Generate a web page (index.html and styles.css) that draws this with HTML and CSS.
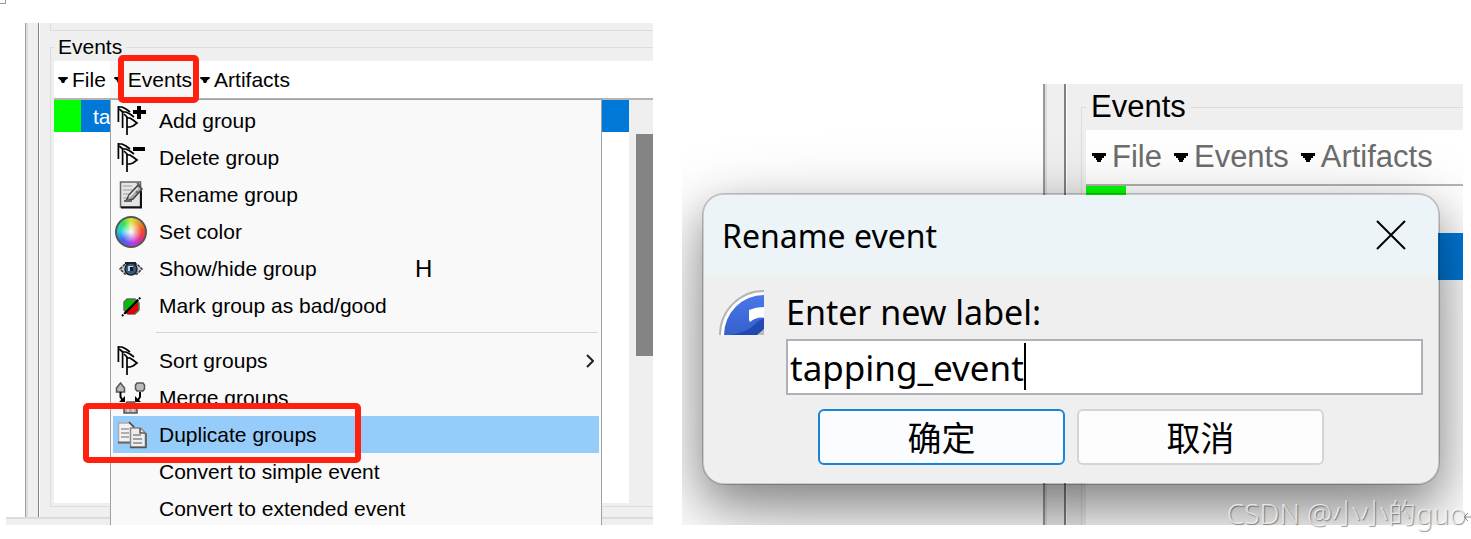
FILE: index.html
```html
<!DOCTYPE html>
<html lang="zh-CN">
<head>
  <meta charset="UTF-8">
  <meta name="viewport" content="width=device-width, initial-scale=1.0">
  <title>Events</title>
  <link rel="stylesheet" href="styles.css">
</head>
<body>
  <svg class="defs" width="0" height="0" aria-hidden="true">
    <symbol id="arrow" viewBox="0 0 14 9">
      <path d="M0 0h14v3h-2v2h-2v2H9v2H5V7H4V5H2V3H0z"/>
    </symbol>
    <symbol id="flags" viewBox="0 0 32 32">
      <g fill="none" stroke="#000" stroke-width="1.700">
        <path d="M3.400 1v16M7.600 6v17M12 12v18"/>
        <path d="M3 2h4l4 2 4 3M4 4l4 3"/>
        <path d="M8 7h3l4 2 4 3M9 9l4 4"/>
        <path d="M12 13h3l3 2 4 3-4 3-3 1h-3"/>
      </g>
    </symbol>
  </svg>
  <div class="corner"></div>

  <main class="page">
    <section class="shot">
      <div class="work">
        <div class="gutter"></div>
        <div class="splitter"></div>
        <div class="panel">
          <div class="group-end"></div>
          <fieldset class="group">
            <legend>Events</legend>
            <div class="menubar">
              <button><svg class="arrow"><use href="#arrow"/></svg>File</button>
              <button class="open"><svg class="arrow"><use href="#arrow"/></svg>Events<span class="mark mark-title"></span></button>
              <button><svg class="arrow"><use href="#arrow"/></svg>Artifacts</button>
            </div>
            <div class="list">
              <div class="rows">
                <div class="row selected"><span class="swatch"></span><span class="name">ta</span></div>
                <div class="menu">
                  <button class="item">
                    <svg class="icon" viewBox="0 0 32 32"><use href="#flags"/><path d="M22 1h4v4h5v4h-5v5h-4V9h-4V5h4z"/></svg>
                    <span class="label">Add group</span>
                  </button>
                  <button class="item">
                    <svg class="icon" viewBox="0 0 32 32"><use href="#flags"/><path d="M18 5h12v4H18z"/></svg>
                    <span class="label">Delete group</span>
                  </button>
                  <button class="item">
                    <svg class="icon" viewBox="0 0 32 32">
                      <path d="M5.500 3h20v25h-20z" fill="#e4e4e4" stroke="#666" stroke-width="1.500"/>
                      <path d="M6 28.500h20V12" fill="none" stroke="#111" stroke-width="2"/>
                      <path d="M8 7h9M8 11h9M8 15h6M8 19h4" stroke="#b4b4b4" stroke-width="1.500"/>
                      <path d="M11 22l3-6L23 6l4 4-9 10z" fill="#aaa" stroke="#444" stroke-width="1.500"/>
                      <path d="M22 4l4 3M18 10l5 4M9 22h8" stroke="#666" stroke-width="2"/>
                      <path d="M14 18l9-9" stroke="#eee" stroke-width="1.500"/>
                    </svg>
                    <span class="label">Rename group</span>
                  </button>
                  <button class="item">
                    <span class="icon wheel"></span>
                    <span class="label">Set color</span>
                  </button>
                  <button class="item">
                    <svg class="icon" viewBox="0 0 32 32">
                      <path d="M5 16l5-5h12l5 5-5 5H10z" fill="#c7ced8" stroke="#333" stroke-width="1.500" stroke-dasharray="3 1"/>
                      <circle cx="16" cy="16" r="6" fill="#3d5878" stroke="#17202e" stroke-width="1.500"/>
                      <path d="M13 13h5v5h-5z" fill="#b9d4ee"/>
                      <path d="M15 14h3v4h-3z" fill="#111c2b"/>
                      <path d="M10 10h11" stroke="#222" stroke-width="2"/>
                    </svg>
                    <span class="label">Show/hide group</span>
                    <kbd>H</kbd>
                  </button>
                  <button class="item">
                    <svg class="icon" viewBox="0 0 32 32">
                      <path d="M12 9h8l4 4v7l-4 4h-7l-4-4v-8z" fill="#00c000" stroke="#666" stroke-width="1.500"/>
                      <path d="M23 12v8l-4 4h-7l-1-1z" fill="#e00000"/>
                      <path d="M7 26L26 7" stroke="#000" stroke-width="2" stroke-dasharray="2 1"/>
                      <path d="M10 23L23 10" stroke="#000" stroke-width="2"/>
                    </svg>
                    <span class="label">Mark group as bad/good</span>
                  </button>
                  <hr>
                  <button class="item">
                    <svg class="icon" viewBox="0 0 32 32"><use href="#flags"/></svg>
                    <span class="label">Sort groups</span>
                    <svg class="more" viewBox="0 0 8 14"><path d="M1 1l6 6-6 6"/></svg>
                  </button>
                  <button class="item">
                    <svg class="icon" viewBox="0 0 32 32">
                      <path d="M1.500 6l4-5 4 5v4h-8z" fill="#bbb" stroke="#555" stroke-width="1.500"/>
                      <path d="M22 1h6l1.500 2v4L28 9h-6l-1.500-2V3z" fill="#bbb" stroke="#555" stroke-width="1.500"/>
                      <path d="M5.500 10v5l2 3M25 10v5l-2 3" fill="none" stroke="#000" stroke-width="2"/>
                      <path d="M10 14v6H4zM20 14v6h6z"/>
                      <path d="M9 24l3-4h7l3 4v7H9z" fill="#aaa" stroke="#555" stroke-width="1.500"/>
                      <path d="M13 22v8M18 22v8" stroke="#ddd" stroke-width="1.500"/>
                    </svg>
                    <span class="label">Merge groups</span>
                  </button>
                  <button class="item active">
                    <svg class="icon" viewBox="0 0 32 32">
                      <path d="M3.500 4h11l4 4v16h-15z" fill="#f2f2f2" stroke="#aaa" stroke-width="1.500"/>
                      <path d="M14 3l5 5v2" fill="none" stroke="#444" stroke-width="1.500"/>
                      <path d="M6 10h8M6 14h8M6 18h8" stroke="#999" stroke-width="1.500"/>
                      <path d="M3 23.500h12" stroke="#666" stroke-width="2"/>
                      <path d="M15.500 9h10l5 5v14h-15z" fill="#eee" stroke="#888" stroke-width="1.500"/>
                      <path d="M25 9v5h5M15 28.500h16V14" fill="none" stroke="#555" stroke-width="1.500"/>
                      <path d="M18 16h8M18 20h9M18 24h9" stroke="#888" stroke-width="1.500"/>
                    </svg>
                    <span class="label">Duplicate groups</span>
                    <span class="mark mark-item"></span>
                  </button>
                  <button class="item"><span class="icon"></span><span class="label">Convert to simple event</span></button>
                  <button class="item"><span class="icon"></span><span class="label">Convert to extended event</span></button>
                </div>
              </div>
              <div class="track"><div class="thumb"></div></div>
            </div>
          </fieldset>
        </div>
      </div>
      <div class="statusbar"></div>
    </section>

    <section class="shot large">
      <div class="work">
        <div class="gutter"></div>
        <div class="splitter"></div>
        <div class="panel">
          <fieldset class="group">
            <legend>Events</legend>
            <div class="menubar">
              <button><svg class="arrow"><use href="#arrow"/></svg>File</button>
              <button><svg class="arrow"><use href="#arrow"/></svg>Events</button>
              <button><svg class="arrow"><use href="#arrow"/></svg>Artifacts</button>
            </div>
            <div class="list">
              <div class="rows">
                <div class="row"><span class="swatch"></span></div>
                <div class="row selected"></div>
              </div>
            </div>
          </fieldset>
        </div>
      </div>
      <form class="dialog" role="dialog" aria-labelledby="dialogTitle" onsubmit="return false">
        <header class="titlebar">
          <h2 id="dialogTitle">Rename event</h2>
          <button class="close" type="button" aria-label="Close">
            <svg viewBox="0 0 30 30"><path d="M1 1l28 28M29 1L1 29"/></svg>
          </button>
        </header>
        <div class="content">
          <svg class="help" viewBox="0 0 45 45">
            <defs>
              <linearGradient id="blue" x1="0" y1="0" x2="0" y2="1">
                <stop offset="0" stop-color="#4a78ea"/>
                <stop offset="0.500" stop-color="#3460cc"/>
                <stop offset="1" stop-color="#0a2c98"/>
              </linearGradient>
            </defs>
            <circle cx="45" cy="45" r="44" fill="#fff" stroke="#b4b4b4" stroke-width="2"/>
            <circle cx="45" cy="45" r="40" fill="url(#blue)"/>
            <path d="M12 45q18-3 26-13l7-4v17z" fill="#1238a0" opacity="0.600"/>
            <path d="M30 20q7-3 16-3v11q-8-2-15 4l-1-2z" fill="#fff"/>
            <path d="M38 45l7-6v6z" fill="#bbb"/>
          </svg>
          <div class="entry">
            <label for="newLabel">Enter new label:</label>
            <div class="field">
              <input type="text" id="newLabel" value="tapping_event">
              <span class="caret"></span>
            </div>
          </div>
        </div>
        <div class="actions">
          <button class="ok">确定</button>
          <button type="button">取消</button>
        </div>
      </form>
    </section>
  </main>
  <svg class="return" viewBox="0 0 9 12"><path d="M9 6H2M6 2L2 6l4 4"/></svg>
  <div class="watermark">CSDN @小小的guo</div>
</body>
</html>
```
FILE: styles.css
```css
* {
  box-sizing: border-box;
}
body {
  margin: 0;
  background: #fff;
  color: #000;
  font-family: "Liberation Sans", Arial, sans-serif;
  font-size: 21px;
  position: relative;
  overflow: hidden;
}
button {
  font: inherit;
  color: inherit;
  margin: 0;
  padding: 0;
  border: none;
  background: none;
}
.defs {
  position: absolute;
}
.corner {
  position: absolute;
  width: 6px;
  height: 4px;
  border-right: 1px solid #999;
  border-bottom: 1px solid #999;
}
.page {
  display: flex;
  gap: 29px;
  height: 100vh;
  padding: 23px 8px 14px 6px;
}

/* application window */
.shot {
  flex: 647 1 0;
  min-width: 0;
  display: flex;
  flex-direction: column;
  position: relative;
  overflow: hidden;
}
.work {
  flex: 1;
  min-height: 0;
  display: flex;
}
.gutter {
  width: 19px;
}
.splitter {
  width: 14px;
  background: #efefef;
  border-left: 1px solid #a0a0a0;
  border-right: 1px solid #808080;
  box-shadow: inset 2px 0 #dcdcdc;
}
.panel {
  flex: 1;
  min-width: 0;
  display: flex;
  flex-direction: column;
  background: #efefef;
  border-left: 1px solid #fff;
  padding: 0 0 10px 10px;
}
.group-end {
  height: 8px;
  margin-bottom: 4px;
  border-left: 1px solid #dcdcdc;
  border-bottom: 1px solid #dcdcdc;
}
.group {
  flex: 1;
  min-width: 0;
  min-height: 0;
  display: flex;
  flex-direction: column;
  margin: 0;
  padding: 2px 0 3px 3px;
  border: 1px solid #dcdcdc;
  border-right: none;
}
.group legend {
  padding: 0 4px;
  line-height: 24px;
}
.menubar {
  display: flex;
  height: 39px;
  background: #fff;
  border-bottom: 2px solid #b4b4b4;
}
.menubar button {
  display: flex;
  align-items: center;
  gap: 4px;
  padding: 0 4px;
  position: relative;
}
.menubar .open {
  background: #f7f7f7;
}
.arrow {
  width: 10px;
  height: 6px;
}
.list {
  flex: 1;
  min-height: 0;
  display: flex;
}
.rows {
  flex: 1;
  min-width: 0;
  background: #fff;
  position: relative;
}
.row {
  display: flex;
  height: 32px;
  line-height: 34px;
}
.selected {
  background: #0078d7;
  color: #fff;
}
.swatch {
  width: 27px;
  background: #0f0;
}
.name {
  padding-left: 12px;
}
.track {
  width: 24px;
  padding: 34px 0 0 7px;
}
.thumb {
  height: 222px;
  background: #848484;
}
.statusbar {
  height: 8px;
  background: #efefef;
  border-top: 2px solid #dcdcdc;
}

/* drop-down menu */
.menu {
  position: absolute;
  top: -1px;
  left: 56px;
  right: 27px;
  padding: 2px;
  background: #f9f9f9;
  border: 1px solid #a0a0a0;
}
.item {
  display: flex;
  align-items: center;
  gap: 12px;
  width: 100%;
  height: 37px;
  padding: 0 5px 0 2px;
  text-align: left;
  position: relative;
}
.active {
  background: #96ccfa;
}
.icon {
  width: 32px;
  height: 32px;
  flex: none;
}
.label {
  width: 244px;
  flex: none;
  white-space: nowrap;
}
.item kbd {
  font-family: inherit;
  font-size: 24px;
}
.wheel {
  border: 2px solid #555;
  border-radius: 50%;
  background: radial-gradient(#fff, transparent 55%), conic-gradient(#d8e840, #f05020 80deg, #e83070 120deg, #b040f0 170deg, #4060f0 225deg, #20d0d8 275deg, #30e050 320deg, #d8e840);
}
.more {
  width: 8px;
  height: 14px;
  margin-left: auto;
  fill: none;
  stroke: #222;
  stroke-width: 2;
}
.menu hr {
  margin: 8px 1px 9px 43px;
  border: none;
  border-top: 1px solid #d4d4d4;
}

/* red highlight frames */
.mark {
  position: absolute;
  z-index: 2;
  border: 6px solid #ff2010;
  border-radius: 5px;
}
.mark-title {
  top: -6px;
  bottom: -5px;
  left: 8px;
  right: -3px;
}
.mark-item {
  top: -13px;
  bottom: -10px;
  left: -30px;
  width: 278px;
}

/* enlarged window with the dialog */
.large {
  flex-grow: 781;
  margin-top: 61px;
}
.large .gutter {
  flex: 361 1 0;
}
.large .splitter {
  width: 23px;
  border-left: 2px solid #999;
  border-right: 2px solid #808080;
}
.large .panel {
  flex: 382 1 0;
  padding: 4px 0 0 14px;
}
.large .group {
  padding: 4px 0 0 4px;
  border-bottom: none;
}
.large legend {
  padding: 0 5px;
  font-size: 31px;
  line-height: 38px;
}
.large .menubar {
  height: 56px;
  font-size: 31px;
}
.large .menubar button {
  gap: 6px;
  padding: 0 6px;
  color: #6d6d6d;
}
.large .arrow {
  width: 14px;
  height: 9px;
}
.large .row {
  height: 47px;
}
.large .swatch {
  width: 40px;
}
.dialog {
  position: absolute;
  top: 109px;
  left: 20px;
  right: 23px;
  border: 2px solid rgba(0, 0, 0, 0.2);
  border-radius: 22px;
  background: #efefef;
  background-clip: padding-box;
  box-shadow: 0 32px 90px rgba(0, 0, 0, 0.24), 0 18px 44px rgba(0, 0, 0, 0.34);
  font-family: "Noto Sans", "Noto Sans CJK SC", sans-serif;
  font-size: 34px;
}
.titlebar {
  display: flex;
  justify-content: space-between;
  align-items: center;
  height: 80px;
  padding: 0 32px 0 18px;
  border-radius: 20px 20px 0 0;
  background: #ecf4f8;
}
.titlebar h2 {
  margin: 0;
  font-size: 32px;
  font-weight: normal;
}
.close {
  display: flex;
}
.close svg {
  width: 30px;
  height: 30px;
  fill: none;
  stroke: #000;
  stroke-width: 2;
}
.content {
  display: flex;
  gap: 22px;
  padding: 15px 15px 0;
}
.help {
  width: 45px;
  height: 45px;
  flex: none;
}
.entry {
  flex: 1;
  min-width: 0;
}
.entry label {
  display: block;
  margin-bottom: 4px;
  line-height: 45px;
}
.field {
  position: relative;
}
.field input {
  display: block;
  width: 100%;
  height: 56px;
  margin: 0;
  padding: 0 2px;
  border: 2px solid #b0b0b8;
  background: #fff;
  color: #000;
  font: inherit;
  font-size: 35px;
  outline: none;
}
.caret {
  position: absolute;
  top: 4px;
  left: 238px;
  width: 2px;
  height: 47px;
  background: #000;
}
.actions {
  display: flex;
  justify-content: center;
  gap: 12px;
  padding: 14px 0 18px;
}
.actions button {
  width: 247px;
  height: 56px;
  border: 2px solid #d4d4d4;
  border-radius: 6px;
  background: #fdfdfd;
  font-family: "Noto Sans CJK SC", sans-serif;
  line-height: 50px;
}
.actions .ok {
  border-color: #1a84d8;
  background: #fafcff;
}

.watermark {
  position: absolute;
  right: 5px;
  bottom: 8px;
  color: rgba(255, 255, 255, 0.7);
  text-shadow: 1px 1px 1px rgba(0, 0, 0, 0.4);
  font-family: "Noto Sans", "Noto Sans CJK SC", sans-serif;
  font-weight: 300;
  font-size: 28px;
  line-height: 36px;
}
.return {
  position: absolute;
  right: 0;
  bottom: 16px;
  width: 9px;
  height: 12px;
  fill: none;
  stroke: #888;
}
```
